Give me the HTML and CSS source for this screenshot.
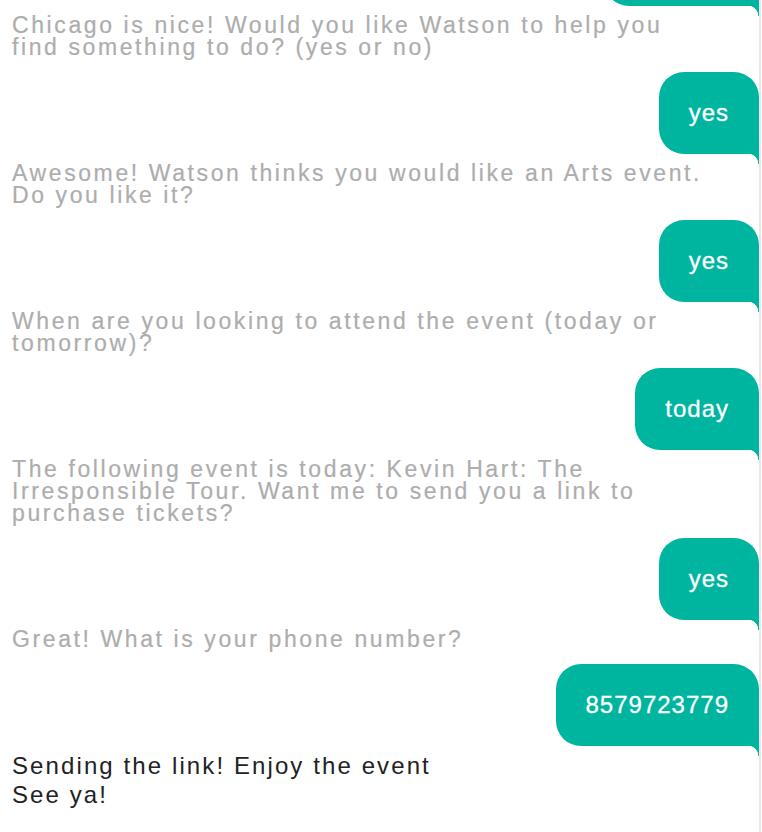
FILE: index.html
```html
<!DOCTYPE html>
<html lang="en">
<head>
<meta charset="utf-8">
<title>Watson Chat</title>
<link rel="stylesheet" href="styles.css">
</head>
<body>
<div class="chat">
  <div class="bubble first">Chicago</div>
  <div class="bot">Chicago is nice! Would you like Watson to help you find something to do? (yes or no)</div>
  <div class="bubble">yes</div>
  <div class="bot">Awesome! Watson thinks you would like an Arts event. Do you like it?</div>
  <div class="bubble">yes</div>
  <div class="bot">When are you looking to attend the event (today or tomorrow)?</div>
  <div class="bubble">today</div>
  <div class="bot">The following event is today: Kevin Hart: The Irresponsible Tour. Want me to send you a link to purchase tickets?</div>
  <div class="bubble">yes</div>
  <div class="bot">Great! What is your phone number?</div>
  <div class="bubble">8579723779</div>
  <div class="bot latest">Sending the link! Enjoy the event<br>See ya!</div>
</div>
</body>
</html>
```

FILE: styles.css
```css
html, body {
  margin: 0;
  padding: 0;
  background: #ffffff;
  overflow: hidden;
}

.chat {
  box-sizing: border-box;
  width: 761px;
  height: 832px;
  padding-left: 12px;
  border-right: 2px solid #e8e8e8;
  display: flex;
  flex-direction: column;
  font-family: "Liberation Sans", Arial, sans-serif;
}

.bot {
  max-width: 705px;
  font-size: 23px;
  line-height: 22px;
  letter-spacing: 2.6px;
  color: #adadad;
  margin-bottom: 14px;
  -webkit-text-stroke: 0.2px #adadad;
}

.bot.latest {
  font-size: 24px;
  line-height: 29px;
  letter-spacing: 2.1px;
  color: #222222;
  margin-top: -3px;
  -webkit-text-stroke: 0;
}

.bubble {
  position: relative;
  align-self: flex-end;
  background: #00b5a0;
  color: #ffffff;
  font-size: 24px;
  line-height: 28px;
  letter-spacing: 1px;
  padding: 27px 30px;
  border-radius: 25px 25px 0 25px;
  margin-bottom: 8px;
  -webkit-text-stroke: 0.3px #ffffff;
}

.bubble::after {
  content: "";
  position: absolute;
  right: 0;
  bottom: -10px;
  width: 11px;
  height: 10px;
  background: radial-gradient(circle at 0 100%, transparent 10px, #00b5a0 10.6px);
}

.bubble.first {
  margin-top: -76px;
}
```
